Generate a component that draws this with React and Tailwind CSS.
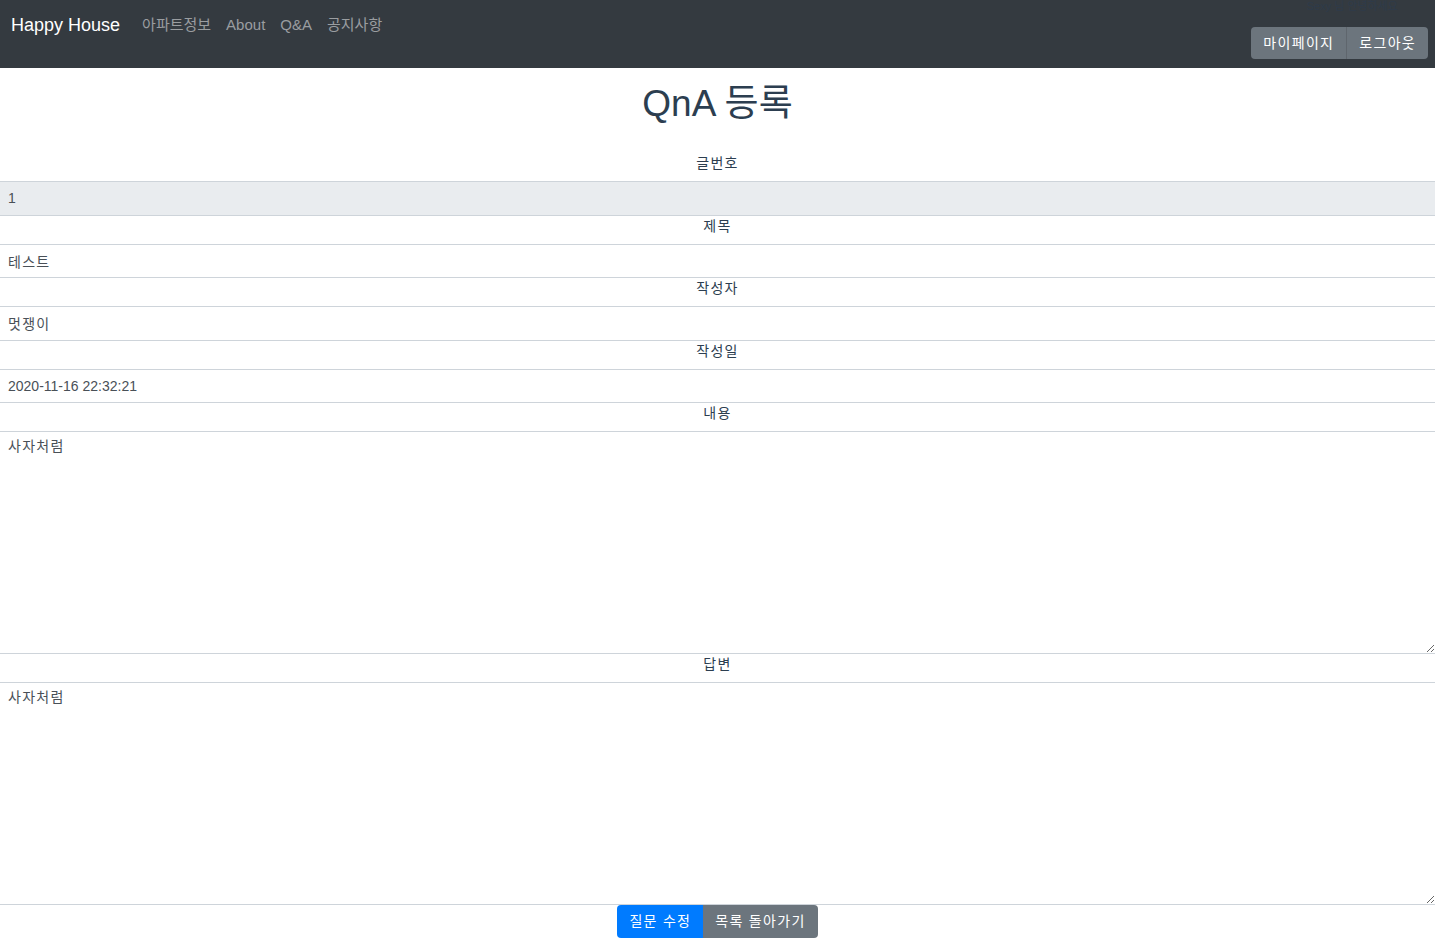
import React from 'react'

const FONT = { fontFamily: '"Liberation Sans", Arial, "Noto Sans CJK KR", sans-serif' }

const fields = [
    { label: '글번호', value: '1', readOnly: true },
    { label: '제목', value: '테스트', ko: true },
    { label: '작성자', value: '멋쟁이', ko: true },
    { label: '작성일', value: '2020-11-16 22:32:21' },
]

function Label({ children }) {
    return (
        <div className="h-[28px] text-center text-[14px] leading-[20px] tracking-[1.3px] text-[#2c3e50]">{children}</div>
    )
}

export default function App() {
    return (
        <div className="min-h-screen bg-white" style={FONT}>
            {/* Navbar */}
            <nav className="h-[68px] bg-[#343a40] flex justify-between pl-[11px] pr-[7px] overflow-hidden">
                <div className="flex items-center h-[50px]">
                    <span className="text-[18px] text-white">Happy House</span>
                    <div className="flex items-center gap-[15px] ml-[22px] text-[15px] text-[#9a9da0]">
                        <span>아파트정보</span>
                        <span>About</span>
                        <span>Q&amp;A</span>
                        <span>공지사항</span>
                    </div>
                </div>
                <div className="flex flex-col items-end">
                    <span className="mr-[30px] text-[11px] leading-[13px] text-[#2e3a4a]">Sexy 님 안녕하세요</span>
                    <div className="flex mt-[14px]">
                        <button className="h-[32px] px-[12px] bg-[#6c757d] text-white text-[14px] tracking-[1.3px] rounded-l-[4px] border-r border-[#5f666d]">마이페이지</button>
                        <button className="h-[32px] px-[12px] bg-[#6c757d] text-white text-[14px] tracking-[1.3px] rounded-r-[4px]">로그아웃</button>
                    </div>
                </div>
            </nav>

            <h1 className="mt-[16px] mb-[29px] text-center text-[37px] leading-[40px] text-[#2c3e50]">QnA 등록</h1>

            {fields.map(f => (
                <div key={f.label}>
                    <Label>{f.label}</Label>
                    <input
                        readOnly
                        value={f.value}
                        className={`block w-full h-[34.5px] px-[8px] text-[14px] text-[#495057] border-y border-[#ced4da] outline-none ${f.ko ? 'tracking-[1.3px]' : ''} ${f.readOnly ? 'bg-[#e9ecef]' : 'bg-white'}`}
                    />
                </div>
            ))}

            <Label>내용</Label>
            <textarea
                readOnly
                value="사자처럼"
                className="block w-full h-[223px] px-[8px] pt-[4px] text-[14px] tracking-[1.3px] text-[#495057] border-y border-[#ced4da] outline-none"
            />

            <Label>답변</Label>
            <textarea
                readOnly
                value="사자처럼"
                className="block w-full h-[223px] px-[8px] pt-[4px] text-[14px] tracking-[1.3px] text-[#495057] border-y border-[#ced4da] outline-none"
            />

            <div className="flex justify-center">
                <button className="h-[33px] px-[12px] bg-[#007bff] text-white text-[14px] tracking-[1.3px] rounded-l-[4px]">질문 수정</button>
                <button className="h-[33px] px-[12px] bg-[#6c757d] text-white text-[14px] tracking-[1.3px] rounded-r-[4px]">목록 돌아가기</button>
            </div>
        </div>
    )
}
